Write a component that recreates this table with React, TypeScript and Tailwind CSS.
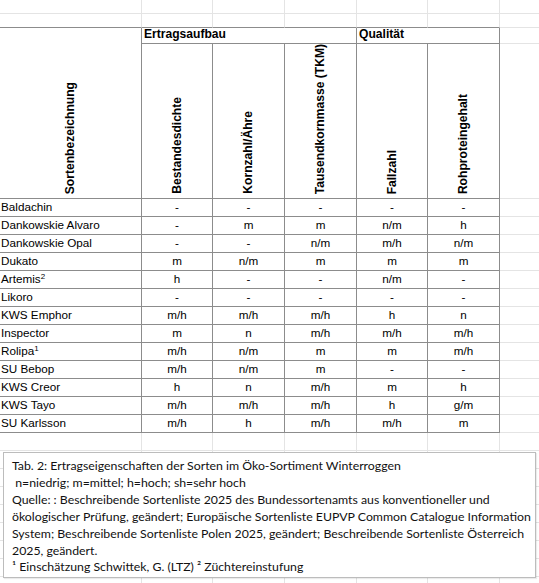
import React from "react";

const FAINT = "border-r border-b border-[#e4e4e4]";
const TOPB = "border-r border-b border-r-[#e4e4e4] border-b-[#8c8c8c]";
const TB = "border-r border-b border-[#8c8c8c]";

type Row = { name: React.ReactNode; v: string[] };

const rows: Row[] = [
  { name: "Baldachin", v: ["-", "-", "-", "-", "-"] },
  { name: "Dankowskie Alvaro", v: ["-", "m", "m", "n/m", "h"] },
  { name: "Dankowskie Opal", v: ["-", "-", "n/m", "m/h", "n/m"] },
  { name: "Dukato", v: ["m", "n/m", "m", "m", "m"] },
  {
    name: (
      <>
        Artemis<sup className="text-[8px]">2</sup>
      </>
    ),
    v: ["h", "-", "-", "n/m", "-"],
  },
  { name: "Likoro", v: ["-", "-", "-", "-", "-"] },
  { name: "KWS Emphor", v: ["m/h", "m/h", "m/h", "h", "n"] },
  { name: "Inspector", v: ["m", "n", "m/h", "m/h", "m/h"] },
  {
    name: (
      <>
        Rolipa<sup className="text-[8px]">1</sup>
      </>
    ),
    v: ["m/h", "n/m", "m", "m", "m/h"],
  },
  { name: "SU Bebop", v: ["m/h", "n/m", "m", "-", "-"] },
  { name: "KWS Creor", v: ["h", "n", "m/h", "m", "h"] },
  { name: "KWS Tayo", v: ["m/h", "m/h", "m/h", "h", "g/m"] },
  { name: "SU Karlsson", v: ["m/h", "h", "m/h", "m/h", "m"] },
];

const vheads = [
  "Bestandesdichte",
  "Kornzahl/Ähre",
  "Tausendkornmasse (TKM)",
  "Fallzahl",
  "Rohproteingehalt",
];

function VText({ children }: { children: React.ReactNode }) {
  return (
    <span className="[writing-mode:vertical-rl] rotate-180 font-bold whitespace-nowrap leading-none text-[12.1px]">
      {children}
    </span>
  );
}

export default function App() {
  const cells: React.ReactNode[] = [];
  let k = 0;
  for (let i = 0; i < 7; i++) cells.push(<div key={k++} className={FAINT} />);
  for (let i = 0; i < 6; i++) cells.push(<div key={k++} className={TOPB} />);
  cells.push(<div key={k++} className={FAINT} />);
  cells.push(
    <div
      key={k++}
      className={`${TB} row-span-2 flex items-end justify-center pb-[4px]`}
    >
      <VText>Sortenbezeichnung</VText>
    </div>
  );
  cells.push(
    <div key={k++} className={`${TB} col-span-3 flex items-end pl-[2px] font-bold text-[12.1px]`}>
      Ertragsaufbau
    </div>
  );
  cells.push(
    <div key={k++} className={`${TB} col-span-2 flex items-end pl-[2px] font-bold text-[12.1px]`}>
      Qualität
    </div>
  );
  cells.push(<div key={k++} className={FAINT} />);
  vheads.forEach((h) => {
    cells.push(
      <div key={k++} className={`${TB} flex items-end justify-center pb-[4px]`}>
        <VText>{h}</VText>
      </div>
    );
  });
  cells.push(<div key={k++} className={FAINT} />);
  rows.forEach((r) => {
    cells.push(
      <div key={k++} className={`${TB} flex items-end pl-[1px] whitespace-nowrap`}>
        <span>{r.name}</span>
      </div>
    );
    r.v.forEach((v) => {
      cells.push(
        <div key={k++} className={`${TB} flex items-end justify-center`}>
          <span>{v}</span>
        </div>
      );
    });
    cells.push(<div key={k++} className={FAINT} />);
  });
  for (let j = 0; j < 9; j++)
    for (let i = 0; i < 7; i++) cells.push(<div key={k++} className={FAINT} />);

  return (
    <div className="relative w-[539px] h-[583px] overflow-hidden bg-white text-black">
      <div
        className="grid grid-cols-[142px_71px_72px_72px_71px_72px_72px] grid-rows-[14px_14px_16px_155px_repeat(13,18px)_repeat(9,18px)] text-[11.7px] leading-normal"
        style={{ fontFamily: '"Liberation Sans", Arial, sans-serif' }}
      >
        {cells}
      </div>
      <div
        className="absolute left-[3px] top-[452px] w-[533px] h-[126px] bg-white border border-[#bcbcbc] shadow-[1px_1px_1px_rgba(0,0,0,0.08)] pl-[8px] pt-[5px] text-[12.3px] leading-[16.9px] text-[#111]"
        style={{ fontFamily: 'Lato, "Open Sans", sans-serif' }}
      >
        <div className="whitespace-nowrap">
          Tab. 2: Ertragseigenschaften der Sorten im Öko-Sortiment Winterroggen
        </div>
        <div className="whitespace-pre"> n=niedrig; m=mittel; h=hoch; sh=sehr hoch</div>
        <div className="whitespace-nowrap">
          Quelle: : Beschreibende Sortenliste 2025 des Bundessortenamts aus konventioneller und
        </div>
        <div className="whitespace-nowrap">
          ökologischer Prüfung, geändert; Europäische Sortenliste EUPVP Common Catalogue Information
        </div>
        <div className="whitespace-nowrap">
          System; Beschreibende Sortenliste Polen 2025, geändert; Beschreibende Sortenliste Österreich
        </div>
        <div className="whitespace-nowrap">2025, geändert.</div>
        <div className="whitespace-nowrap">
          ¹ Einschätzung Schwittek, G. (LTZ) ² Züchtereinstufung
        </div>
      </div>
    </div>
  );
}
